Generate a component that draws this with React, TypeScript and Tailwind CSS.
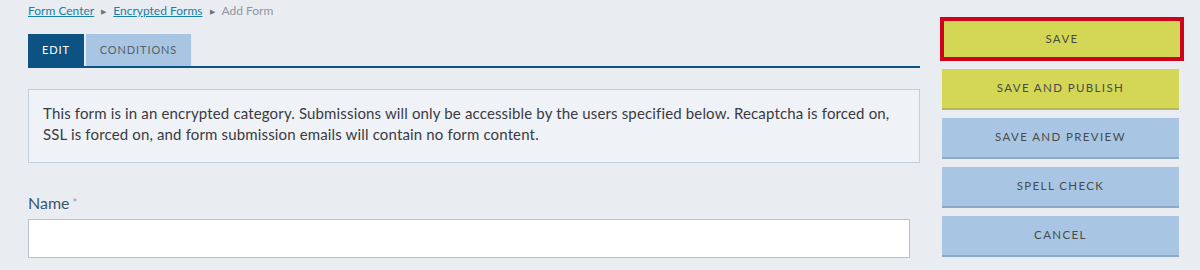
import React from 'react';

const font = { fontFamily: 'Lato, "Open Sans", sans-serif' };

function SideButton({ label, tone, active }: { label: string; tone: 'yellow' | 'blue'; active?: boolean }) {
  const base =
    tone === 'yellow'
      ? 'bg-[#d4d656] border-b-2 border-[#b5b85a]'
      : 'bg-[#a8c6e3] border-b-2 border-[#8ba9c9]';
  if (active) {
    return (
      <button
        type="button"
        className="-ml-[2px] w-[244px] h-[44px] border-4 border-[#d0021b] bg-[#d4d656] text-[11.5px] tracking-[0.12em] text-[#4a4a44] uppercase"
      >
        {label}
      </button>
    );
  }
  return (
    <button
      type="button"
      className={`w-[237px] h-[41px] pb-[2px] ${base} text-[11.5px] tracking-[0.12em] text-[#4a4a4a] uppercase`}
    >
      {label}
    </button>
  );
}

export default function App() {
  return (
    <div className="w-[1200px] h-[270px] bg-[#e9edf2] overflow-hidden flex" style={font}>
      <div className="w-[920px] pl-[28px] pt-[4px] flex flex-col">
        <div className="flex items-center gap-[7px] text-[12px] leading-[14px]">
          <a href="#" className="text-[#1b7ea6] underline">Form Center</a>
          <span className="text-[#6d7378] text-[7px]">▶</span>
          <a href="#" className="text-[#1b7ea6] underline">Encrypted Forms</a>
          <span className="text-[#6d7378] text-[7px]">▶</span>
          <span className="text-[#8e959c]">Add Form</span>
        </div>

        <div className="mt-[16px] flex gap-[2px] border-b-2 border-[#0c5384]">
          <div className="w-[56px] h-[32px] bg-[#0c5384] text-white text-[11px] tracking-[0.08em] flex items-center justify-center">
            EDIT
          </div>
          <div className="w-[105px] h-[32px] bg-[#a8c6e3] text-[#5a5f66] text-[11px] tracking-[0.08em] flex items-center justify-center">
            CONDITIONS
          </div>
        </div>

        <div className="mt-[21px] h-[74px] border border-[#c3cedb] bg-[#eff2f7] px-[14px] pt-[13px] text-[15px] tracking-[0.15px] leading-[21px] text-[#3a3a42]">
          This form is in an encrypted category. Submissions will only be accessible by the users specified below. Recaptcha is forced on, SSL is forced on, and form submission emails will contain no form content.
        </div>

        <div className="mt-[30px] text-[16px] leading-[19px] text-[#3a566b]">
          Name<span className="ml-[3px] text-[#8e959c] text-[11px] align-top">*</span>
        </div>
        <div className="mt-[7px] w-[882px] h-[39px] bg-white border border-[#b8c3d0]" />
      </div>

      <div className="ml-[22px] pt-[17px] flex flex-col gap-[8px]">
        <SideButton label="Save" tone="yellow" active />
        <SideButton label="Save and Publish" tone="yellow" />
        <SideButton label="Save and Preview" tone="blue" />
        <SideButton label="Spell Check" tone="blue" />
        <SideButton label="Cancel" tone="blue" />
      </div>
    </div>
  );
}
